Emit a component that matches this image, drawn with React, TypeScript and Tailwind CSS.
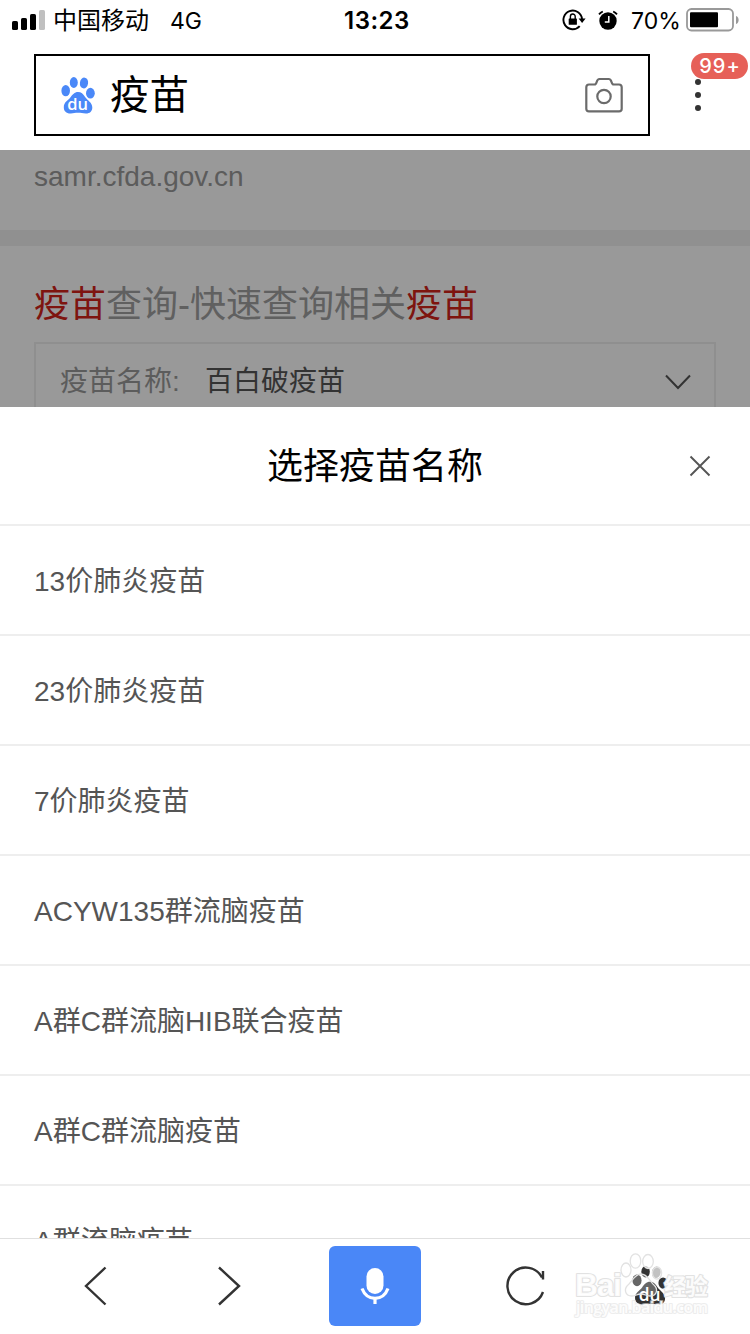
const vaccines = [
  "13价肺炎疫苗",
  "23价肺炎疫苗",
  "7价肺炎疫苗",
  "ACYW135群流脑疫苗",
  "A群C群流脑HIB联合疫苗",
  "A群C群流脑疫苗",
  "A群流脑疫苗",
];

function StatusBar() {
  return (
    <div className="flex h-10 shrink-0 items-center pl-3 font-['Inter','Noto_Sans_CJK_SC',sans-serif] text-2xl leading-10 text-black">
      <svg width="33" height="20" viewBox="0 0 33 20">
        <rect x="0" y="11" width="6" height="9" rx="1.6" />
        <rect x="9" y="8" width="6" height="12" rx="1.6" />
        <rect x="18" y="4" width="6" height="16" rx="1.6" />
        <rect x="27" y="0" width="6" height="20" rx="1.6" fill="#c0c0c0" />
      </svg>
      <span className="ml-2 w-[117px] whitespace-nowrap pt-0.5">中国移动</span>
      <span className="w-[174px] pt-0.5 text-[23px]">4G</span>
      <span className="w-[218px] pt-0.5 font-semibold tracking-[0.5px]">13:23</span>
      <svg width="24" height="22" viewBox="0 0 24 22">
        <path d="M17.7 17.1A9.3 9.3 0 1 1 20 10" fill="none" stroke="#000" strokeWidth="1.9" />
        <path d="M16.6 9.5h7l-3.500 4.400z" />
        <rect x="6.700" y="9.500" width="8.200" height="6.300" rx=".6" />
        <path d="M8.400 10V7.400a2.400 2.400 0 0 1 4.800 0V10" fill="none" stroke="#000" strokeWidth="1.4" />
      </svg>
      <svg className="ml-3" width="20" height="20" viewBox="0 0 20 20">
        <circle cx="10" cy="11" r="8.7" />
        <path d="M1 4.400A11 11 0 0 1 4.800 1.500M15.200 1.500A11 11 0 0 1 19 4.400" fill="none" stroke="#000" strokeWidth="1.8" />
        <path d="M10.800 6v6H6.800" fill="none" stroke="#fff" strokeWidth="1.500" />
      </svg>
      <span className="ml-[13px] w-[55px] pt-0.5 text-[23px]">70%</span>
      <svg width="53" height="24" viewBox="0 0 53 24">
        <rect x="1" y="1" width="46" height="21.5" rx="4.500" fill="none" stroke="#999" strokeWidth="1.8" />
        <rect x="4" y="4.300" width="28" height="15" rx="1" />
        <path d="M50 8c3.500 1 3.500 7 0 8z" fill="#999" />
      </svg>
    </div>
  );
}

function Paw({ color, className }: { color: string; className?: string }) {
  return (
    <svg className={className} viewBox="0 0 34 37">
      <g fill={color}>
        <ellipse cx="4.7" cy="13.7" rx="4.3" ry="5.6" />
        <ellipse cx="12.8" cy="5.5" rx="4" ry="5.4" />
        <ellipse cx="23" cy="6" rx="4.1" ry="5.4" transform="rotate(8 23 6)" />
        <ellipse cx="29.4" cy="16.2" rx="4.4" ry="5.4" />
        <path d="M17 15c3.300 0 5 1.800 7.300 5.300 2.100 3.100 7 5.200 7 10.200 0 4-2.600 6.100-6.500 6-3.200-.1-4.800-.7-7.800-.7s-4.600.8-7.700.7c-4-.1-6.500-2.300-6.500-6.300 0-5.200 4.300-6.600 6.700-9.900C11.500 17.600 13.500 15 17 15z" />
      </g>
      <text
        x="16.600"
        y="32.800"
        textAnchor="middle"
        fill="#fff"
        className="font-['Open_Sans',sans-serif] text-[16.5px] font-semibold"
      >
        du
      </text>
    </svg>
  );
}

function SearchHeader() {
  return (
    <header className="flex h-[110px] shrink-0 items-start pl-[34px] pt-3.5">
      <div className="flex h-[82px] w-[616px] items-center border-2 border-black pl-[25px] pr-[25px]">
        <Paw color="#4a88f8" className="h-[37px] w-[34px]" />
        <span className="ml-[15px] flex-1 text-[39.5px] leading-[78px] text-black">疫苗</span>
        <svg width="38" height="36" viewBox="0 0 38 36" fill="none" stroke="#6b6b6b" strokeWidth="2.2">
          <path
            d="M4 7.500h5.500c1.500 0 1.700-.8 2.100-2.300.5-1.900 1.100-3.200 3-3.200h9c1.900 0 2.500 1.300 3 3.200.4 1.500.6 2.300 2.100 2.300H34c1.900 0 2.700.9 2.700 2.700v21.500c0 1.800-.8 2.700-2.700 2.700H4c-1.900 0-2.700-.9-2.700-2.700V10.200C1.300 8.400 2.100 7.500 4 7.500z"
            strokeLinejoin="round"
          />
          <circle cx="19" cy="19.500" r="6.700" />
        </svg>
      </div>
      <div className="relative ml-11 flex h-[82px] w-[7px] flex-col items-center justify-center gap-[7px]">
        <i className="size-1.5 rounded-full bg-[#333]" />
        <i className="size-1.5 rounded-full bg-[#333]" />
        <i className="size-1.5 rounded-full bg-[#333]" />
        <span className="absolute -left-[3px] -top-px h-[26px] w-[57px] rounded-full bg-[#e66058] pl-px text-center font-['Inter',sans-serif] text-xl font-medium leading-[27px] tracking-[1px] text-white">
          99+
        </span>
      </div>
    </header>
  );
}

function SearchResults() {
  return (
    <section className="relative h-[257px] shrink-0 overflow-hidden bg-white">
      <div className="h-20 px-[34px] pt-[7px] text-[28px] leading-10 text-[#999]">samr.cfda.gov.cn</div>
      <div className="h-4 bg-[#f1f1f1]" />
      <div className="px-[34px] pt-8">
        <h2 className="h-16 text-4xl leading-[54px] text-[#a0a0a0]">
          <span className="text-[#d2231a]">疫苗</span>查询-快速查询相关<span className="text-[#d2231a]">疫苗</span>
        </h2>
        <div className="flex h-20 w-[682px] items-center border-2 border-[#eee] pl-6 pr-[23px] text-[28px]">
          <span className="w-[145px] text-[#999]">疫苗名称:</span>
          <span className="flex-1 text-[#555]">百白破疫苗</span>
          <svg width="26" height="16" viewBox="0 0 26 16" fill="none" stroke="#555" strokeWidth="2">
            <path d="M1 1.500 13 14 25 1.500" />
          </svg>
        </div>
      </div>
      <div className="absolute inset-0 bg-black/40" />
    </section>
  );
}

function VaccineSheet() {
  return (
    <section className="min-h-0 flex-1 overflow-hidden bg-white">
      <div className="flex h-[119px] items-center border-b-2 border-[#eee] pl-[61px] pr-[39px]">
        <h1 className="flex-1 pt-[3px] text-center text-4xl leading-[54px] text-black">选择疫苗名称</h1>
        <svg width="22" height="22" viewBox="0 0 22 22" fill="none" stroke="#555" strokeWidth="1.900">
          <path d="M1.500 1.500 20.500 20.500M20.500 1.500 1.500 20.500" />
        </svg>
      </div>
      <ul>
        {vaccines.map((name) => (
          <li key={name} className="h-[110px] border-b-2 border-[#eee] pl-[34px] pt-0.5 text-[28px] leading-[108px] text-[#555]">
            {name}
          </li>
        ))}
      </ul>
    </section>
  );
}

function Watermark() {
  return (
    <svg
      className="pointer-events-none absolute bottom-3 left-[572px]"
      width="140"
      height="72"
      viewBox="0 0 140 72"
      fill="#fff"
      stroke="#e2e2e2"
      strokeWidth="1.300"
    >
      <g fillOpacity=".7">
        <ellipse cx="54" cy="20" rx="5" ry="7" />
        <ellipse cx="63.500" cy="11" rx="5.300" ry="7.200" />
        <ellipse cx="76" cy="11.500" rx="5.300" ry="7" />
        <ellipse cx="85" cy="23" rx="4.600" ry="6" />
        <path
          d="M69 24c6 0 8 6 12 10 6 5 4 12-3 12-4 0-5-2-9-2s-5 2-9 2c-7 0-9-7-3-12 4-4 6-10 12-10z"
          fillOpacity=".25"
        />
      </g>
      <g paintOrder="stroke" strokeLinejoin="round" strokeWidth="2.200" fillOpacity=".9">
        <text x="3" y="46" textLength="47" className="font-['Liberation_Sans',sans-serif] text-[32px] font-bold">
          Bai
        </text>
        <text x="92" y="45" textLength="44" className="font-['Noto_Sans_CJK_SC',sans-serif] text-[23px] font-bold">
          经验
        </text>
        <text
          x="4"
          y="63"
          textLength="132"
          strokeOpacity=".6"
          className="font-['Open_Sans',sans-serif] text-[16px] font-semibold"
        >
          jingyan.baidu.com
        </text>
      </g>
    </svg>
  );
}

function Toolbar() {
  return (
    <nav className="relative flex h-24 shrink-0 items-center border-t border-[#e0e0e0] bg-white pb-0.5 pl-[84px]">
      <svg width="24" height="40" viewBox="0 0 24 40" fill="none" stroke="#333" strokeWidth="2.400">
        <path d="M21.500 1.500 2 20l19.500 18.500" />
      </svg>
      <svg className="ml-[109px]" width="24" height="40" viewBox="0 0 24 40" fill="none" stroke="#333" strokeWidth="2.400">
        <path d="M2 1.500 22 20 2 38.500" />
      </svg>
      <button className="ml-[88px] flex h-20 w-[92px] items-center justify-center rounded-md bg-[#4a87f7]">
        <svg width="30" height="38" viewBox="0 0 30 38">
          <rect x="6.500" y="1" width="17" height="26" rx="8.500" fill="#fff" />
          <path d="M2 21.500c2.300 6 7.300 9.800 13 9.800s10.700-3.800 13-9.800M15 31v6" fill="none" stroke="#fff" strokeWidth="3.200" />
        </svg>
      </button>
      <svg className="ml-[84px]" width="42" height="40" viewBox="0 0 42 40" fill="none" stroke="#333" strokeWidth="2.400">
        <path d="M38 26A18.300 18.300 0 1 1 37 11.500M38 5v8.500" />
      </svg>
      <Paw color="#333" className="ml-[85px] h-[39px] w-9" />
      <Watermark />
    </nav>
  );
}

export default function App() {
  return (
    <main className="flex h-[1334px] w-[750px] flex-col overflow-hidden bg-white font-['Liberation_Sans','Noto_Sans_CJK_SC',sans-serif]">
      <StatusBar />
      <SearchHeader />
      <SearchResults />
      <VaccineSheet />
      <Toolbar />
    </main>
  );
}
